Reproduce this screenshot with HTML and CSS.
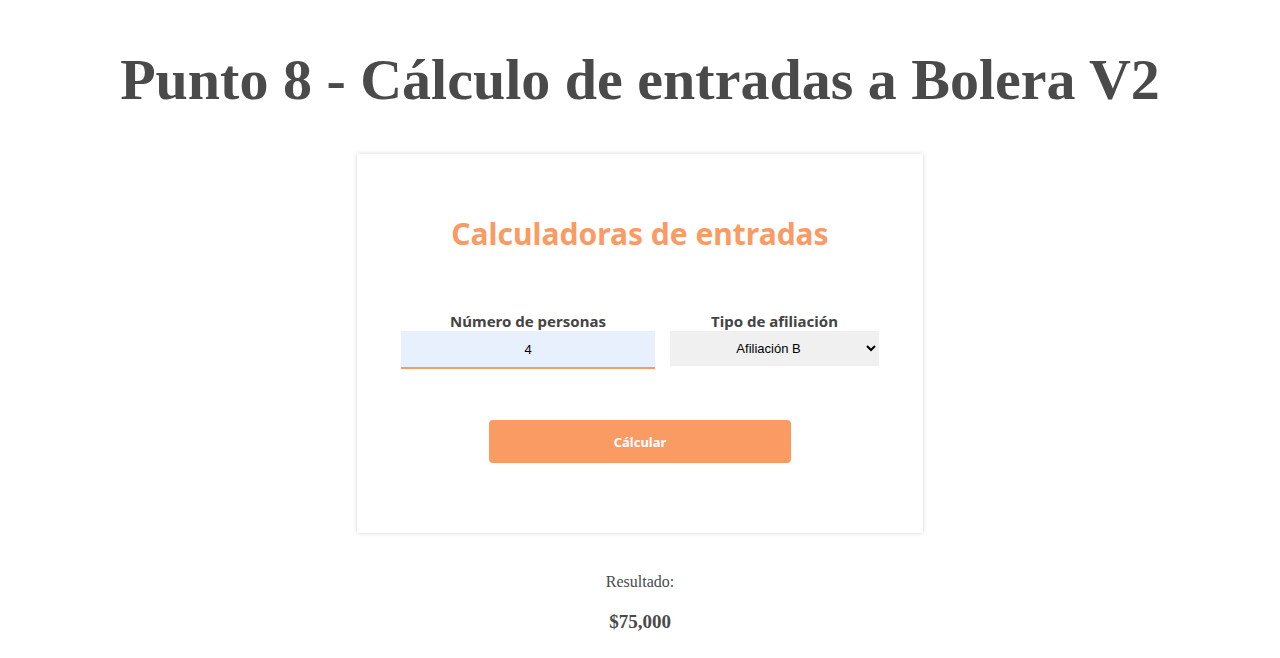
FILE: index.html
```html
<!DOCTYPE html>
<html lang="es">
<head>
<meta charset="utf-8">
<title>Punto 8</title>
<link rel="stylesheet" href="styles.css">
</head>
<body>
<h1 class="page-title">Punto 8 - Cálculo de entradas a Bolera V2</h1>
<main class="card">
  <h2 class="card-title">Calculadoras de entradas</h2>
  <div class="fields">
    <div class="field field-people">
      <label class="field-label" for="personas">Número de personas</label>
      <input id="personas" class="input" type="text" value="4">
    </div>
    <div class="field field-type">
      <label class="field-label" for="tipo">Tipo de afiliación</label>
      <select id="tipo" class="select">
        <option>Afiliación A</option>
        <option selected>Afiliación B</option>
        <option>Afiliación C</option>
      </select>
    </div>
  </div>
  <button class="btn" type="button">Cálcular</button>
</main>
<section class="result">
  <p class="result-label">Resultado:</p>
  <p class="result-value">$75,000</p>
</section>
</body>
</html>
```

FILE: styles.css
```css
html, body {
  margin: 0;
  padding: 0;
  background: #ffffff;
}
body {
  font-family: "Liberation Serif", "Times New Roman", serif;
  color: #4a4a4a;
  display: flex;
  flex-direction: column;
  align-items: center;
}
.page-title {
  margin: 46px 0 0;
  font-size: 58px;
  line-height: 68px;
  font-weight: bold;
  color: #4a4a4a;
  text-align: center;
}
.card {
  margin-top: 40px;
  width: 566px;
  height: 379px;
  box-sizing: border-box;
  background: #fff;
  box-shadow: 0 0 4px rgba(0,0,0,0.18);
  display: flex;
  flex-direction: column;
  align-items: center;
  font-family: "Noto Sans", "Open Sans", sans-serif;
}
.card-title {
  margin: 58px 0 0;
  font-size: 30px;
  line-height: 44px;
  font-weight: bold;
  color: #fb9b64;
}
.fields {
  margin-top: 55px;
  display: flex;
  gap: 15px;
  align-items: flex-start;
}
.field {
  display: flex;
  flex-direction: column;
  align-items: center;
}
.field-people { width: 254px; }
.field-type { width: 209px; }
.field-label {
  font-size: 15px;
  line-height: 20px;
  font-weight: bold;
  color: #444;
}
.input {
  width: 100%;
  height: 38px;
  box-sizing: border-box;
  border: none;
  border-bottom: 2px solid #fb9b64;
  background: #e8f0fe;
  text-align: center;
  font-family: "Liberation Sans", Arial, sans-serif;
  font-size: 13px;
  color: #000;
  outline: none;
  padding: 0;
}
.select {
  width: 100%;
  height: 35px;
  box-sizing: border-box;
  border: none;
  background: #f0f0f0;
  text-align: center;
  text-align-last: center;
  font-family: "Liberation Sans", Arial, sans-serif;
  font-size: 13px;
  color: #000;
  padding: 0 4px;
}
.btn {
  margin-top: 51px;
  width: 302px;
  height: 43px;
  border: none;
  border-radius: 4px;
  background: #fb9b64;
  color: #fff;
  font-family: "Noto Sans", "Open Sans", sans-serif;
  font-size: 13px;
  font-weight: bold;
  cursor: pointer;
}
.result {
  text-align: center;
  margin-top: 40px;
}
.result-label {
  margin: 0;
  font-size: 16px;
  line-height: 18px;
  color: #4a4a4a;
}
.result-value {
  margin: 20px 0 0;
  font-size: 19px;
  line-height: 22px;
  font-weight: bold;
  color: #4a4a4a;
}
```
